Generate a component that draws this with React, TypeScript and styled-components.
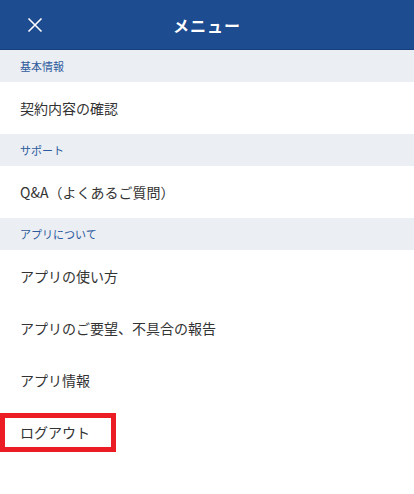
import React from 'react';
import styled, { createGlobalStyle } from 'styled-components';

const GlobalStyle = createGlobalStyle`
  html, body {
    margin: 0;
    padding: 0;
    background: #fff;
    font-family: "Noto Sans CJK JP", "Noto Sans", sans-serif;
  }
`;

const Screen = styled.div`
  width: 414px;
  min-height: 494px;
  display: flex;
  flex-direction: column;
  background: #fff;
`;

const Header = styled.header`
  height: 49px;
  border-bottom: 1px solid #163f7c;
  background: #1e4c91;
  display: flex;
  align-items: center;
  justify-content: center;
  position: relative;
`;

const CloseButton = styled.button`
  position: absolute;
  left: 26px;
  top: 16px;
  width: 18px;
  height: 18px;
  padding: 0;
  border: none;
  background: transparent;
  display: flex;
  align-items: center;
  justify-content: center;
`;

const Title = styled.h1`
  margin: 0;
  font-size: 16px;
  font-weight: 700;
  color: #fff;
  letter-spacing: 1px;
`;

const SectionHeader = styled.div`
  height: 32px;
  padding-left: 20px;
  display: flex;
  align-items: center;
  background: #ebeef3;
  color: #2c5a9c;
  font-size: 11px;
`;

const Item = styled.div<{ $marked?: boolean }>`
  height: 52px;
  padding-left: 20px;
  display: flex;
  align-items: center;
  font-size: 14px;
  color: #333;
  position: relative;
`;

const Marker = styled.div`
  position: absolute;
  left: 0;
  top: 7px;
  width: 116px;
  height: 39px;
  box-sizing: border-box;
  border: 5px solid #ec1c24;
`;

const sections: { title: string; items: string[] }[] = [
  { title: '基本情報', items: ['契約内容の確認'] },
  { title: 'サポート', items: ['Q&A（よくあるご質問）'] },
  {
    title: 'アプリについて',
    items: ['アプリの使い方', 'アプリのご要望、不具合の報告', 'アプリ情報', 'ログアウト'],
  },
];

export default function App() {
  return (
    <>
      <GlobalStyle />
      <Screen>
        <Header>
          <CloseButton aria-label="閉じる">
            <svg width="16" height="16" viewBox="0 0 16 16">
              <path d="M1.5 1.5 L14.5 14.5 M14.5 1.5 L1.5 14.5" stroke="#fff" strokeWidth="1.6" />
            </svg>
          </CloseButton>
          <Title>メニュー</Title>
        </Header>
        {sections.map((s) => (
          <React.Fragment key={s.title}>
            <SectionHeader>{s.title}</SectionHeader>
            {s.items.map((it) => (
              <Item key={it}>
                {it}
                {it === 'ログアウト' && <Marker />}
              </Item>
            ))}
          </React.Fragment>
        ))}
      </Screen>
    </>
  );
}
